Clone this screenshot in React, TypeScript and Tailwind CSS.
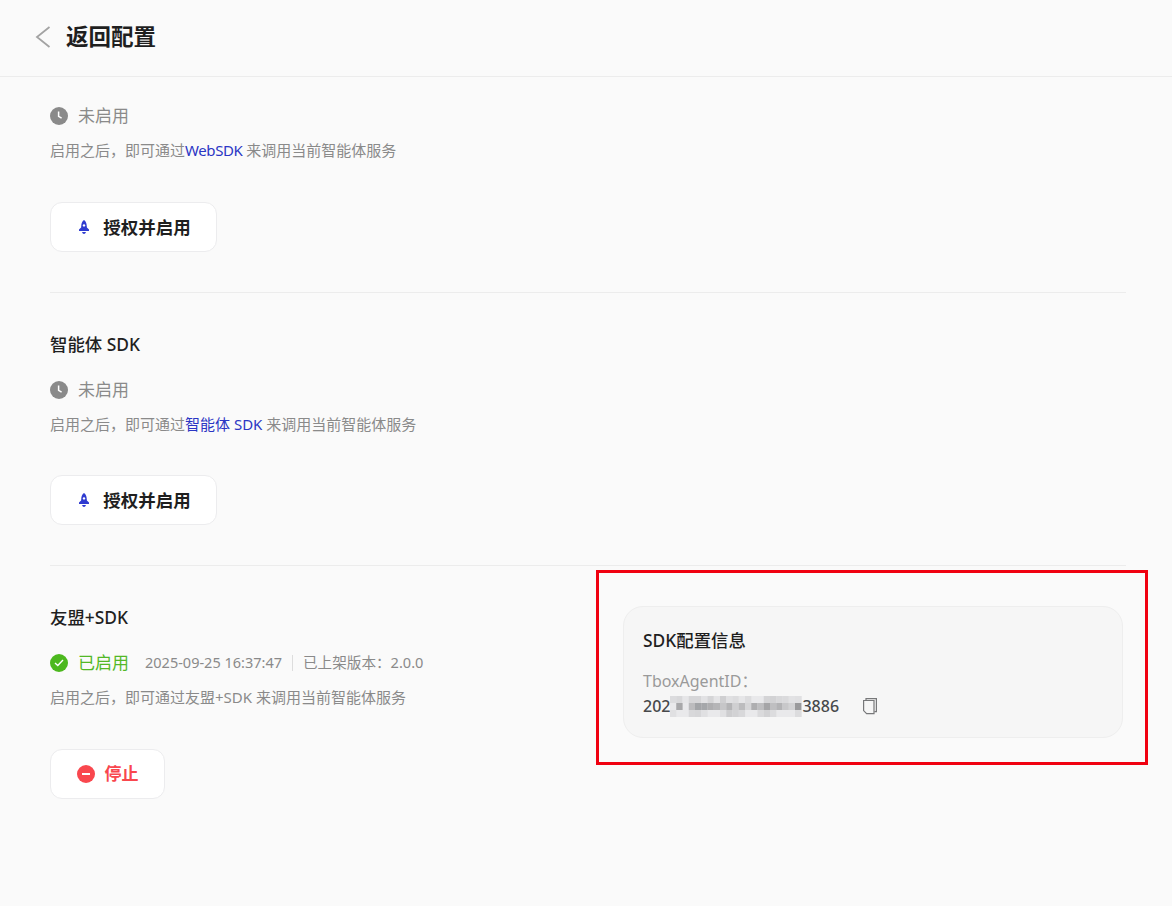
const FONT = "font-['Noto_Sans','Noto_Sans_CJK_SC',sans-serif]";

// Mosaic cells over the hidden part of the ID: [column, row, grey]
const MOSAIC: [number, number, string][] = [
  [1, 1, "#a8a8aa"], [3, 1, "#bcbcbe"], [4, 1, "#a3a5a8"], [5, 1, "#a5a7aa"], [6, 1, "#aeaeb0"], [7, 1, "#b5b5b7"],
  [8, 1, "#c6c6c8"], [9, 1, "#b4b4b6"], [10, 1, "#cfcfd1"], [11, 1, "#bcbcbe"], [12, 1, "#d6d6d8"], [13, 1, "#aeaeb0"], [14, 1, "#bebec0"],
  [15, 1, "#a5a5a7"], [16, 1, "#bfbfc1"], [17, 1, "#b3b3b5"], [18, 1, "#c8c8ca"], [19, 1, "#d2d2d4"], [20, 1, "#9a9a9c"],
  [0, 0, "#dcdcde"], [1, 0, "#d8d8da"], [2, 0, "#e6e6e8"], [3, 0, "#d6d6d8"], [4, 0, "#d6d6d8"], [5, 0, "#e2e2e4"], [6, 0, "#d5d5d7"],
  [7, 0, "#e4e4e6"], [8, 0, "#cfcfd1"], [9, 0, "#e0e0e2"], [10, 0, "#dcdcde"], [11, 0, "#e6e6e8"], [12, 0, "#dcdcde"], [15, 0, "#d4d4d6"],
  [16, 0, "#d2d2d4"], [17, 0, "#d8d8da"], [18, 0, "#dadadc"], [19, 0, "#e2e2e4"], [20, 0, "#e0e0e2"],
  [0, 2, "#e0e0e2"], [3, 2, "#d8d8da"], [4, 2, "#d6d6d8"], [5, 2, "#e0e0e2"], [8, 2, "#e0e0e2"], [9, 2, "#cdcdcf"], [10, 2, "#d2d2d4"],
  [11, 2, "#d8d8da"], [14, 2, "#dadadc"], [15, 2, "#d2d2d4"], [16, 2, "#dcdcde"], [20, 2, "#dcdcde"],
];

function Mosaic() {
  return (
    <svg width="132" height="21" viewBox="0 0 132 21" className="inline-block align-middle">
      <rect width="132" height="21" fill="#e9e9eb" />
      {MOSAIC.map(([c, r, fill]) => (
        <rect key={`${c}-${r}`} x={c * 6.25} y={r * 7} width="6.35" height="7" fill={fill} />
      ))}
    </svg>
  );
}

function BackIcon() {
  return (
    <svg width="16" height="22" viewBox="0 0 16 22" fill="none" stroke="#a3a3a3" strokeWidth="1.8" className="shrink-0">
      <path d="M14.5 1L2 11L14.5 21" />
    </svg>
  );
}

function RocketIcon() {
  return (
    <svg width="12" height="14" viewBox="0 0 12 14" className="shrink-0">
      <path d="M6 0C7.8 1.3 8.7 3.4 8.7 5.6L8.9 7.4L11 9.4V11H1V9.4L3.1 7.4L3.3 5.6C3.3 3.4 4.2 1.3 6 0Z" fill="#2f3bd0" />
      <circle cx="6" cy="5.4" r="1.2" fill="#ffffff" />
      <path d="M4 12H8C7.6 13.3 6.8 14 6 14C5.2 14 4.4 13.3 4 12Z" fill="#2f3bd0" />
    </svg>
  );
}

function CopyIcon() {
  return (
    <svg width="16" height="18" viewBox="0 0 16 18" fill="none" stroke="#77787a" strokeWidth="1.2" className="shrink-0">
      <path d="M4 3.5V1.6H14.4V14.6H12.4" />
      <path d="M1.6 3.5H12V16.6H4.6L1.6 13.6V3.5Z" />
    </svg>
  );
}

function NotEnabled() {
  return (
    <div className="flex h-6 items-center">
      <span className="flex h-[18px] w-[18px] items-center justify-center rounded-full bg-[#8a8a8a]">
        <svg width="18" height="18" viewBox="0 0 18 18" fill="none" stroke="#ffffff" strokeWidth="1.5">
          <path d="M8.6 4.5V9.4L11.6 11.2" />
        </svg>
      </span>
      <span className="ml-[10px] text-[17px] text-[#8a8a8a]">未启用</span>
    </div>
  );
}

export default function App() {
  const authButton = (
    <>
      <RocketIcon />
      <span className="text-[17.5px] font-bold text-[#1f1f1f]">授权并启用</span>
    </>
  );

  return (
    <div className={`${FONT} relative h-[906px] w-[1172px] overflow-hidden bg-[#fafafa]`}>
      <header className="flex h-[77px] items-center border-b border-[#ececec] pb-[3px] pl-[35px]">
        <BackIcon />
        <h1 className="ml-[15px] text-[22.5px] font-bold text-[#1f1f1f]">返回配置</h1>
      </header>

      <main className="px-[50px] pt-[27px]">
        <section className="h-[188px]">
          <NotEnabled />
          <p className="mt-[12px] h-5 text-[15px] leading-5 text-[#8a8a8a]">
            启用之后，即可通过<span className="tracking-[-0.4px] text-[#2b36c4]">WebSDK</span> 来调用当前智能体服务
          </p>
          <button className="mt-[42px] flex h-[50px] w-[167px] items-center justify-center gap-[13px] rounded-[12px] border border-[#ececee] bg-white pl-[2px]">
            {authButton}
          </button>
        </section>

        <div className="h-px w-[1076px] bg-[#ececec]" />

        <section className="pt-[39px]">
          <h2 className="h-6 text-[17.4px] font-medium leading-6 text-[#1f1f1f]">智能体 SDK</h2>
          <div className="mt-[22px]">
            <NotEnabled />
          </div>
          <p className="mt-[12px] h-5 text-[15px] leading-5 text-[#8a8a8a]">
            启用之后，即可通过<span className="text-[#2b36c4]">智能体 SDK</span> 来调用当前智能体服务
          </p>
          <button className="mt-[41px] flex h-[50px] w-[167px] items-center justify-center gap-[13px] rounded-[12px] border border-[#ececee] bg-white pl-[2px]">
            {authButton}
          </button>
        </section>

        <div className="mt-[40px] h-px w-[1076px] bg-[#ececec]" />

        <section className="-mr-px flex justify-between">
          <div className="pt-[39px]">
            <h2 className="h-6 text-[17.4px] font-medium leading-6 text-[#1f1f1f]">友盟+SDK</h2>
            <div className="mt-[22px] flex h-6 items-center">
              <span className="flex h-[18px] w-[18px] items-center justify-center rounded-full bg-[#4cb81e]">
                <svg width="10" height="8" viewBox="0 0 10 8" fill="none" stroke="#ffffff" strokeWidth="1.4">
                  <path d="M1 4L3.8 6.6L9 1" />
                </svg>
              </span>
              <span className="ml-[10px] text-[17px] text-[#52b827]">已启用</span>
              <span className="ml-[16px] text-[14.5px] text-[#8a8a8a]">2025-09-25 16:37:47</span>
              <span className="mx-[10px] h-[16px] w-px bg-[#dddddd]" />
              <span className="text-[14.6px] text-[#8a8a8a]">已上架版本：2.0.0</span>
            </div>
            <p className="mt-[12px] h-5 text-[15px] leading-5 text-[#8a8a8a]">
              启用之后，即可通过友盟+SDK 来调用当前智能体服务
            </p>
            <button className="mt-[42px] flex h-[50px] w-[115px] items-center justify-center gap-[10px] rounded-[12px] border border-[#ececee] bg-white">
              <span className="flex h-[18px] w-[18px] items-center justify-center rounded-full bg-[#f9474e]">
                <span className="h-[2px] w-[8px] bg-white" />
              </span>
              <span className="text-[17px] font-bold text-[#f9474e]">停止</span>
            </button>
          </div>

          <div className="mt-[40px] h-[132px] w-[500px] rounded-[20px] border border-[#eeeeee] bg-[#f6f6f6] pl-[19px] pt-[21px]">
            <h3 className="h-6 text-[17.4px] font-medium leading-6 text-[#1f1f1f]">SDK配置信息</h3>
            <div className="mt-[18px] h-[22px] text-[16px] leading-[22px] text-[#9a9a9a]">TboxAgentID：</div>
            <div className="mt-[2px] flex h-[24px] items-center text-[16px] font-medium text-[#47494b]">
              <span>202</span>
              <Mosaic />
              <span>3886</span>
              <span className="ml-[23px]">
                <CopyIcon />
              </span>
            </div>
          </div>
        </section>
      </main>

      {/* Red annotation drawn over the screenshot */}
      <div className="absolute left-[596px] top-[570px] h-[195px] w-[552px] border-[3px] border-[#f00010]" />
    </div>
  );
}
